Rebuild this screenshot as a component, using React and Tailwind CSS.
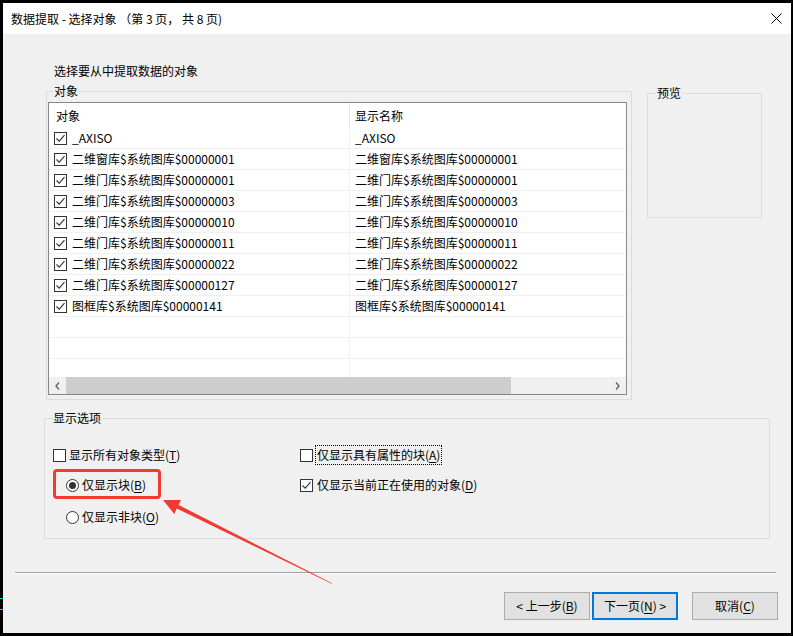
import React from 'react'

const FONT = "font-['Noto_Sans_CJK_SC','Noto_Sans',sans-serif]"

const CheckBox = ({ checked }) => (
  <span className="w-[13px] h-[13px] border border-[#333333] bg-white flex items-center justify-center shrink-0">
    {checked && (
      <svg width="11" height="11" viewBox="0 0 11 11">
        <path d="M1.5 5.5 L4.2 8.2 L9.5 2.2" fill="none" stroke="#333333" strokeWidth="1.1" />
      </svg>
    )}
  </span>
)

const Radio = ({ checked }) => (
  <span className="w-[13px] h-[13px] rounded-full border border-[#333333] bg-white flex items-center justify-center shrink-0">
    {checked && <span className="w-[7px] h-[7px] rounded-full bg-[#333333]" />}
  </span>
)

const Key = ({ children }) => <span className="underline underline-offset-[2px]">{children}</span>

const rows = [
  '_AXISO',
  '二维窗库$系统图库$00000001',
  '二维门库$系统图库$00000001',
  '二维门库$系统图库$00000003',
  '二维门库$系统图库$00000010',
  '二维门库$系统图库$00000011',
  '二维门库$系统图库$00000022',
  '二维门库$系统图库$00000127',
  '图框库$系统图库$00000141',
]

const Chevron = ({ dir }) => (
  <svg width="5" height="8" viewBox="0 0 5 8">
    <path d={dir === 'left' ? 'M4 0.5 L1 4 L4 7.5' : 'M1 0.5 L4 4 L1 7.5'} fill="none" stroke="#606060" strokeWidth="1.3" />
  </svg>
)

export default function App() {
  return (
    <div className={`relative w-[793px] h-[636px] bg-black pt-[3px] pl-[3px] pr-[2px] pb-[3px] text-[12px] text-black ${FONT}`}>
      <div className="w-full h-full bg-[#f0f0f0] flex flex-col">
        {/* title bar */}
        <div className="h-[31px] bg-white flex items-center justify-between pl-[8px] pr-[9px] shrink-0">
          <span className="leading-[16px]">数据提取 - 选择对象 （第 3 页， 共 8 页)</span>
          <svg width="11" height="11" viewBox="0 0 11 11">
            <path d="M0.5 0.5 L10.5 10.5 M10.5 0.5 L0.5 10.5" stroke="#000" strokeWidth="1" />
          </svg>
        </div>

        {/* body */}
        <div className="flex-1 flex flex-col pt-[29px]">
          <p className="ml-[51px] leading-[16px]">选择要从中提取数据的对象</p>

          <div className="flex items-start mt-[4px] ml-[43px]">
            <fieldset className="w-[586px] h-[317px] border border-[#dcdcdc]">
              <legend className="ml-[6px] px-[1px] leading-[16px]">对象</legend>
              <div className="ml-[1px] mt-[3px] w-[579px] h-[293px] border border-[#828790] bg-white flex flex-col">
                <div className="h-[25px] flex items-center shrink-0">
                  <div className="w-[301px] h-full flex items-center pl-[7px] border-r border-[#e5e5e5]">对象</div>
                  <div className="pl-[5px]">显示名称</div>
                </div>
                <div className="flex-1 overflow-hidden">
                  {[...rows, '', '', ''].map((r, i) => (
                    <div key={i} className="h-[21px] flex border-b border-[#f0f0f0]">
                      <div className="w-[301px] flex items-center border-r border-[#f0f0f0] pl-[5px]">
                        {r && (
                          <>
                            <CheckBox checked />
                            <span className="ml-[5px]">{r}</span>
                          </>
                        )}
                      </div>
                      <div className="flex items-center pl-[5px]">{r}</div>
                    </div>
                  ))}
                </div>
                <div className="h-[17px] bg-[#f0f0f0] flex shrink-0">
                  <div className="w-[17px] flex items-center justify-center">
                    <Chevron dir="left" />
                  </div>
                  <div className="flex-1 flex">
                    <div className="w-[445px] bg-[#cdcdcd]" />
                  </div>
                  <div className="w-[17px] flex items-center justify-center">
                    <Chevron dir="right" />
                  </div>
                </div>
              </div>
            </fieldset>

            <fieldset className="ml-[15px] mt-[2px] w-[115px] h-[133px] border border-[#dcdcdc]">
              <legend className="ml-[8px] px-[1px] leading-[16px]">预览</legend>
            </fieldset>
          </div>

          <fieldset className="ml-[41px] mt-[10px] w-[726px] h-[129px] border border-[#dcdcdc]">
            <legend className="ml-[7px] px-[1px] leading-[16px]">显示选项</legend>
            <div className="flex pl-[8px] pt-[19px]">
              <div className="w-[247px] flex flex-col">
                <div className="h-[20px] flex items-center">
                  <CheckBox />
                  <span className="ml-[3px]">显示所有对象类型(<Key>T</Key>)</span>
                </div>
                <div className="h-[20px] mt-[10px] ml-[13px] flex items-center">
                  <Radio checked />
                  <span className="ml-[3px]">仅显示块(<Key>B</Key>)</span>
                </div>
                <div className="h-[20px] mt-[12px] ml-[13px] flex items-center">
                  <Radio />
                  <span className="ml-[3px]">仅显示非块(<Key>O</Key>)</span>
                </div>
              </div>
              <div className="flex flex-col">
                <div className="h-[20px] flex items-center">
                  <CheckBox />
                  <span className="ml-[3px] px-[1px] leading-[18px] outline outline-1 outline-dotted outline-black">
                    仅显示具有属性的块(<Key>A</Key>)
                  </span>
                </div>
                <div className="h-[20px] mt-[10px] flex items-center">
                  <CheckBox checked />
                  <span className="ml-[4px]">仅显示当前正在使用的对象(<Key>D</Key>)</span>
                </div>
              </div>
            </div>
          </fieldset>

          <div className="ml-[12px] mt-[33px] w-[761px] border-t border-[#a0a0a0] border-b border-b-white" />

          <div className="flex mt-[18px] ml-[501px]">
            <button className="w-[86px] h-[28px] bg-[#e1e1e1] border border-[#adadad] flex items-center justify-center">
              &lt; 上一步(<Key>B</Key>)
            </button>
            <button className="ml-[2px] w-[86px] h-[28px] bg-[#e1e1e1] border-2 border-[#0078d7] flex items-center justify-center">
              下一页(<Key>N</Key>) &gt;
            </button>
            <button className="ml-[14px] w-[86px] h-[28px] bg-[#e1e1e1] border border-[#adadad] flex items-center justify-center">
              取消(<Key>C</Key>)
            </button>
          </div>
        </div>
      </div>

      {/* annotation: red box + arrow */}
      <div className="absolute left-[53px] top-[469px] w-[108px] h-[30px] border-[3px] border-[#f23a30] rounded-[4px]" />
      <svg className="absolute left-0 top-0 pointer-events-none" width="793" height="636" viewBox="0 0 793 636">
        <polygon
          points="163,500 181,500 178.6,505 332,583.3 331.7,583.8 176.8,508.6 174.3,514"
          fill="#f23a30"
        />
      </svg>

      {/* screenshot edge artifacts */}
      <div className="absolute left-0 top-[598px] w-[3px] h-[1px] bg-[#19c8e6]" />
      <div className="absolute left-0 top-[609px] w-[3px] h-[1px] bg-[#19c8e6]" />
    </div>
  )
}
